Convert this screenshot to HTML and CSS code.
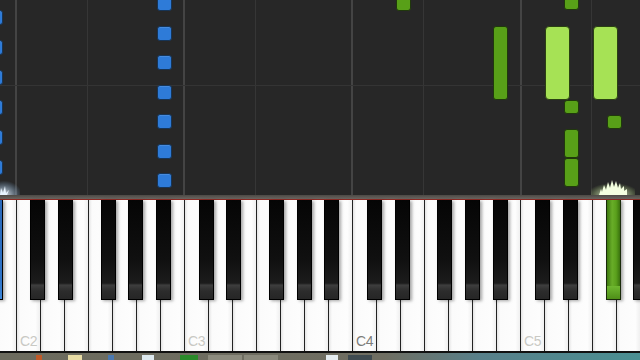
FILE: index.html
```html
<!DOCTYPE html>
<html>
<head>
<meta charset="utf-8">
<link rel="stylesheet" href="styles.css">
</head>
<body>
<div class="screen">
  <div class="roll">
    <div class="vline c" style="left:15px"></div>
    <div class="vline" style="left:87px"></div>
    <div class="vline c" style="left:183px"></div>
    <div class="vline" style="left:255px"></div>
    <div class="vline c" style="left:351px"></div>
    <div class="vline" style="left:423px"></div>
    <div class="vline c" style="left:520px"></div>
    <div class="vline" style="left:591px"></div>
    <div class="hline" style="top:85px"></div>

    <div class="note blue" style="left:-12px;top:10px;height:15px"></div>
    <div class="note blue" style="left:-12px;top:40px;height:15px"></div>
    <div class="note blue" style="left:-12px;top:70px;height:15px"></div>
    <div class="note blue" style="left:-12px;top:100px;height:15px"></div>
    <div class="note blue" style="left:-12px;top:130px;height:15px"></div>
    <div class="note blue" style="left:-12px;top:160px;height:15px"></div>

    <div class="note blue" style="left:157px;top:-4px;height:15px"></div>
    <div class="note blue" style="left:157px;top:26px;height:15px"></div>
    <div class="note blue" style="left:157px;top:55px;height:15px"></div>
    <div class="note blue" style="left:157px;top:85px;height:15px"></div>
    <div class="note blue" style="left:157px;top:114px;height:15px"></div>
    <div class="note blue" style="left:157px;top:144px;height:15px"></div>
    <div class="note blue" style="left:157px;top:173px;height:15px"></div>

    <div class="note green" style="left:396px;top:-5px;height:16px"></div>
    <div class="note green" style="left:493px;top:26px;height:74px"></div>
    <div class="note light" style="left:545px;top:26px;height:74px"></div>
    <div class="note light" style="left:593px;top:26px;height:74px"></div>
    <div class="note green" style="left:564px;top:-5px;height:15px"></div>
    <div class="note green" style="left:564px;top:100px;height:14px"></div>
    <div class="note green" style="left:564px;top:129px;height:29px"></div>
    <div class="note green" style="left:564px;top:158px;height:29px"></div>
    <div class="note green" style="left:607px;top:115px;height:14px"></div>

    <svg class="spark blue-spark" width="20" height="16" viewBox="0 0 20 16">
      <defs>
        <radialGradient id="gb" cx="0.2" cy="1" r="0.9">
          <stop offset="0" stop-color="#ffffff" stop-opacity="0.9"/>
          <stop offset="1" stop-color="#8fc8ff" stop-opacity="0"/>
        </radialGradient>
      </defs>
      <rect width="20" height="16" fill="url(#gb)"/>
      <polygon points="0,16 1,9 3,14 5,7 6,14 9,11 7,16" fill="#e8f4ff"/>
    </svg>

    <svg class="spark green-spark" width="44" height="20" viewBox="0 0 44 20">
      <defs>
        <radialGradient id="gg" cx="0.5" cy="1" r="0.6">
          <stop offset="0" stop-color="#ffffff" stop-opacity="0.95"/>
          <stop offset="0.5" stop-color="#e8ffc8" stop-opacity="0.5"/>
          <stop offset="1" stop-color="#c0f080" stop-opacity="0"/>
        </radialGradient>
      </defs>
      <rect width="44" height="20" fill="url(#gg)"/>
      <polygon points="8,20 10,14 11,17 13,10 15,15 17,7 19,13 21,5 23,12 25,6 27,13 29,8 30,14 33,11 33,16 36,14 36,20" fill="#f4ffe0"/>
    </svg>
  </div>

  <div class="rail"></div>
  <div class="redline"></div>

  <div class="keyboard">
    <div class="whites">
      <div class="wk"></div>
      <div class="wk"><span class="lbl">C2</span></div>
      <div class="wk"></div><div class="wk"></div><div class="wk"></div><div class="wk"></div><div class="wk"></div><div class="wk"></div>
      <div class="wk"><span class="lbl">C3</span></div>
      <div class="wk"></div><div class="wk"></div><div class="wk"></div><div class="wk"></div><div class="wk"></div><div class="wk"></div>
      <div class="wk"><span class="lbl dark">C4</span></div>
      <div class="wk"></div><div class="wk"></div><div class="wk"></div><div class="wk"></div><div class="wk"></div><div class="wk"></div>
      <div class="wk"><span class="lbl">C5</span></div>
      <div class="wk"></div><div class="wk"></div><div class="wk"></div><div class="wk"></div>
    </div>

    <div class="bk bk-blue" style="left:-12px"></div>
    <div class="bk" style="left:30px"></div>
    <div class="bk" style="left:58px"></div>
    <div class="bk" style="left:101px"></div>
    <div class="bk" style="left:128px"></div>
    <div class="bk" style="left:156px"></div>
    <div class="bk" style="left:199px"></div>
    <div class="bk" style="left:226px"></div>
    <div class="bk" style="left:269px"></div>
    <div class="bk" style="left:297px"></div>
    <div class="bk" style="left:324px"></div>
    <div class="bk" style="left:367px"></div>
    <div class="bk" style="left:395px"></div>
    <div class="bk" style="left:437px"></div>
    <div class="bk" style="left:465px"></div>
    <div class="bk" style="left:493px"></div>
    <div class="bk" style="left:535px"></div>
    <div class="bk" style="left:563px"></div>
    <div class="bk bk-green" style="left:606px"></div>
    <div class="bk" style="left:633px"></div>
  </div>

  <div class="taskbar">
    <span class="tb t1"></span>
    <span class="tb t2"></span>
    <span class="tb t3"></span>
    <span class="tb t4"></span>
    <span class="tb t5"></span>
    <span class="tb t6"></span>
    <span class="tb t7"></span>
    <span class="tb t8"></span>
    <span class="tb t9"></span>
  </div>
</div>
</body>
</html>
```

FILE: styles.css
```css
html, body {
  margin: 0;
  padding: 0;
  background: #262626;
}

.screen {
  width: 640px;
  height: 360px;
  overflow: hidden;
  display: flex;
  flex-direction: column;
  font-family: "Liberation Sans", Arial, sans-serif;
}

.roll {
  position: relative;
  height: 195px;
  flex: none;
  background: #272727;
  overflow: hidden;
}

.vline {
  position: absolute;
  top: 0;
  bottom: 0;
  width: 1px;
  background: #363636;
}

.vline.c {
  width: 2px;
  background: #444444;
}

.hline {
  position: absolute;
  left: 0;
  right: 0;
  height: 1px;
  background: #343434;
}

.note {
  position: absolute;
  box-sizing: border-box;
  width: 15px;
  border-radius: 3px;
}

.note.blue {
  width: 15px;
  background: #2e7bd8;
  border: 1px solid #163456;
  box-shadow: inset 0 1px 0 rgba(255,255,255,0.12);
}

.note.green {
  background: #58a018;
  border: 1px solid #20380c;
}

.note.light {
  width: 25px;
  background: #a6e255;
  border: 1px solid #2a4012;
  border-radius: 4px;
}

.spark {
  position: absolute;
  bottom: 0;
}

.blue-spark {
  left: 0;
}

.green-spark {
  left: 591px;
}

.rail {
  height: 4px;
  flex: none;
  background: linear-gradient(#4c4945, #6a6560);
}

.redline {
  height: 1px;
  flex: none;
  background: #8e2a24;
}

.keyboard {
  position: relative;
  height: 153px;
  flex: none;
  background: #111;
}

.whites {
  display: flex;
  margin-left: -8px;
  height: 151px;
}

.wk {
  flex: none;
  width: 24px;
  box-sizing: border-box;
  border-left: 1px solid #222;
  background: linear-gradient(to right, #e4e4e4 0px, #fbfbfb 3px, #fdfdfd 80%, #f0f0f0 100%);
  position: relative;
  display: flex;
  align-items: flex-end;
  padding: 0 0 3px 3px;
}

.lbl {
  font-size: 14px;
  line-height: 14px;
  color: #c9c9c4;
  letter-spacing: -0.3px;
}

.lbl.dark {
  color: #7d7d7a;
}

.bk {
  position: absolute;
  top: 0;
  width: 15px;
  height: 100px;
  box-sizing: border-box;
  border: 1px solid #000;
  border-top: none;
  background: linear-gradient(#050505 0%, #101010 60%, #1c1c1c 84%, #3e3e3e 86%, #2c2c2c 92%, #262626 100%);
  box-shadow: 2px 1px 3px rgba(0,0,0,0.35);
}

.bk-blue {
  background: linear-gradient(#2a68b8 0%, #2f74c8 80%, #3d86d8 100%);
}

.bk-green {
  width: 15px;
  background: linear-gradient(to right, #3e7a10 0%, #68ad28 40%, #5aa01c 70%, #3a720e 100%);
  border-color: #1a2a0a;
}

.bk-green::after {
  content: "";
  position: absolute;
  left: 0;
  right: 0;
  bottom: 0;
  height: 13px;
  background: linear-gradient(#6fb830, #4e8e18);
}

.taskbar {
  height: 7px;
  flex: none;
  position: relative;
  background: linear-gradient(to right, #6c6b5e 0%, #6f6e62 60%, #58808a 75%, #4a8f92 100%);
  display: flex;
  align-items: flex-end;
}

.tb {
  display: block;
  height: 5px;
  flex: none;
}

.t1 { margin-left: 36px; width: 6px; background: #c05a28; }
.t2 { margin-left: 26px; width: 14px; background: #e8dca4; }
.t3 { margin-left: 26px; width: 6px; background: #4a78b0; }
.t4 { margin-left: 28px; width: 12px; background: #dce8ee; }
.t5 { margin-left: 26px; width: 18px; background: #2a8a2a; }
.t6 { margin-left: 10px; width: 34px; background: #8c8b7e; }
.t7 { margin-left: 2px; width: 34px; background: #8a897c; }
.t8 { margin-left: 48px; width: 12px; background: #e4ecf0; }
.t9 { margin-left: 10px; width: 24px; background: #3e4a50; }
```
